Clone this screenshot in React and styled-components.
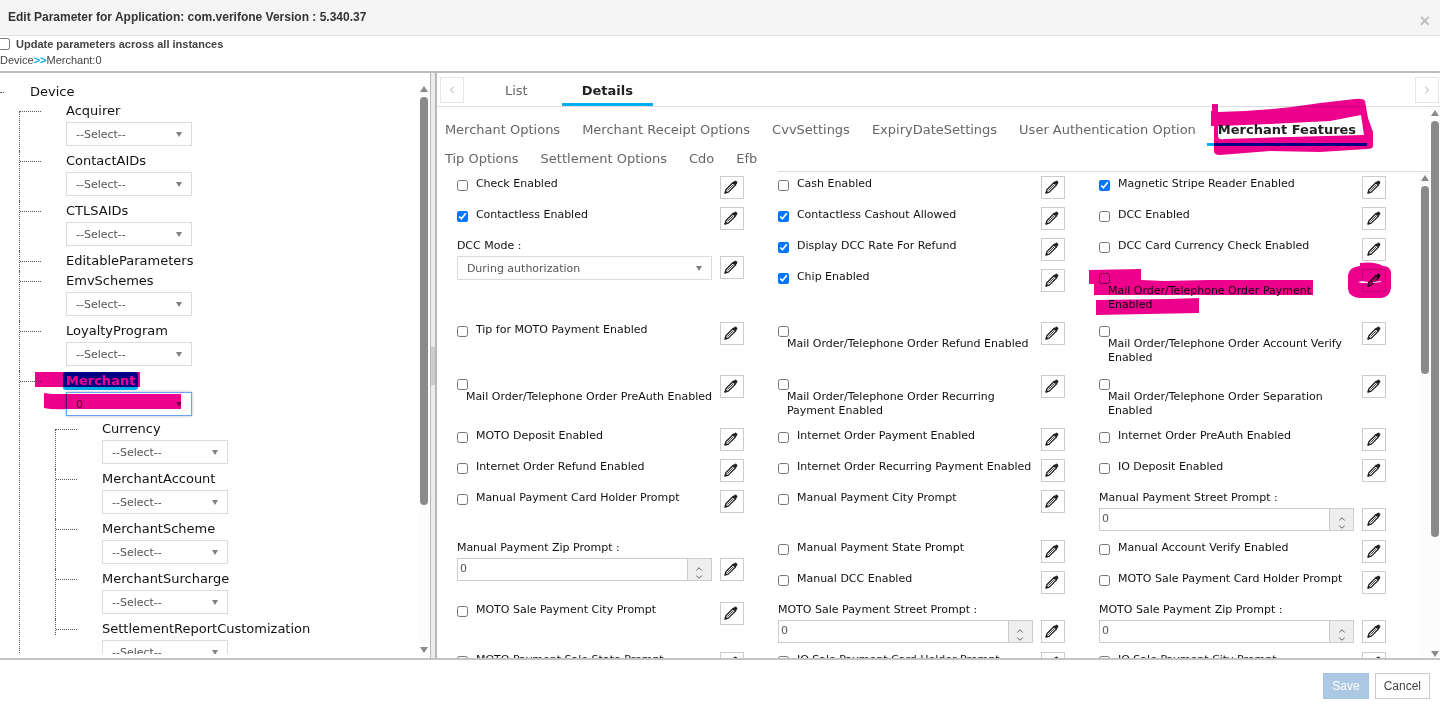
import React, { useState } from 'react'
import styled, { createGlobalStyle, css } from 'styled-components'
import { ChevronDown, ChevronLeft, ChevronRight, ChevronUp } from 'lucide-react'

const tree = [
  { name: 'Acquirer', select: '--Select--' },
  { name: 'ContactAIDs', select: '--Select--' },
  { name: 'CTLSAIDs', select: '--Select--' },
  { name: 'EditableParameters' },
  { name: 'EmvSchemes', select: '--Select--' },
  { name: 'LoyaltyProgram', select: '--Select--' },
  {
    name: 'Merchant',
    select: '0',
    active: true,
    children: [
      { name: 'Currency', select: '--Select--' },
      { name: 'MerchantAccount', select: '--Select--' },
      { name: 'MerchantScheme', select: '--Select--' },
      { name: 'MerchantSurcharge', select: '--Select--' },
      { name: 'SettlementReportCustomization', select: '--Select--' },
    ],
  },
]

const sections = [
  'Merchant Options',
  'Merchant Receipt Options',
  'CvvSettings',
  'ExpiryDateSettings',
  'User Authentication Option',
  'Merchant Features',
  'Tip Options',
  'Settlement Options',
  'Cdo',
  'Efb',
]

const fields = [
  { label: 'Check Enabled' },
  { label: 'Cash Enabled' },
  { label: 'Magnetic Stripe Reader Enabled', checked: true },
  { label: 'Contactless Enabled', checked: true },
  { label: 'Contactless Cashout Allowed', checked: true },
  { label: 'DCC Enabled' },
  { label: 'DCC Mode :', type: 'select', value: 'During authorization', span: 2 },
  { label: 'Display DCC Rate For Refund', checked: true },
  { label: 'DCC Card Currency Check Enabled' },
  { label: 'Chip Enabled', checked: true },
  { label: 'Mail Order/Telephone Order Payment Enabled', long: true, marked: true },
  { label: 'Tip for MOTO Payment Enabled' },
  { label: 'Mail Order/Telephone Order Refund Enabled', long: true },
  { label: 'Mail Order/Telephone Order Account Verify Enabled', long: true },
  { label: 'Mail Order/Telephone Order PreAuth Enabled', long: true },
  { label: 'Mail Order/Telephone Order Recurring Payment Enabled', long: true },
  { label: 'Mail Order/Telephone Order Separation Enabled', long: true },
  { label: 'MOTO Deposit Enabled' },
  { label: 'Internet Order Payment Enabled' },
  { label: 'Internet Order PreAuth Enabled' },
  { label: 'Internet Order Refund Enabled' },
  { label: 'Internet Order Recurring Payment Enabled' },
  { label: 'IO Deposit Enabled' },
  { label: 'Manual Payment Card Holder Prompt' },
  { label: 'Manual Payment City Prompt' },
  { label: 'Manual Payment Street Prompt :', type: 'number' },
  { label: 'Manual Payment Zip Prompt :', type: 'number', span: 2 },
  { label: 'Manual Payment State Prompt' },
  { label: 'Manual Account Verify Enabled' },
  { label: 'Manual DCC Enabled' },
  { label: 'MOTO Sale Payment Card Holder Prompt' },
  { label: 'MOTO Sale Payment City Prompt' },
  { label: 'MOTO Sale Payment Street Prompt :', type: 'number' },
  { label: 'MOTO Sale Payment Zip Prompt :', type: 'number' },
  { label: 'MOTO Payment Sale State Prompt' },
  { label: 'IO Sale Payment Card Holder Prompt' },
  { label: 'IO Sale Payment City Prompt' },
]

const PencilIcon = () => (
  <svg width="14" height="14" viewBox="0 0 14 14" aria-hidden="true">
    <path d="M1 13 L1.9 9.7 L9.3 2.3 L11.7 4.7 L4.3 12.1 Z" fill="none" stroke="#222" strokeWidth="1.3" strokeLinejoin="round" />
    <path d="M8.8 2.8 L10.7 0.9 Q11.5 0.2 12.3 0.9 L13.1 1.7 Q13.8 2.5 13.1 3.3 L11.2 5.2 Z" fill="#222" />
    <path d="M3.4 10.6 L9.6 4.4" stroke="#222" strokeWidth="0.8" />
    <path d="M0.5 13.5 L1.4 10.2 L3.8 12.6 Z" fill="#222" />
  </svg>
)

const Scroll = ({ size, cut }) => (
  <ScrollTrack aria-hidden="true">
    <Arrow />
    <Thumb $size={size} />
    {!cut && <Arrow $down />}
  </ScrollTrack>
)

const Dropdown = ({ id, value, active, label }) => (
  <SelectBox $active={active}>
    <select id={id} aria-label={label} defaultValue={value}>
      <option>{value}</option>
    </select>
  </SelectBox>
)

const TreeNode = ({ node }) => (
  <Node>
    <Branch><i /></Branch>
    <NodeBody>
      <NodeName>
        {node.active ? <b>{node.name}</b> : node.name}
        {node.active && (
          <Marker $left={-31} $top={1} width="105" height="16" viewBox="0 0 105 16">
            <path d="M0 0H105V15H0Z" />
          </Marker>
        )}
      </NodeName>
      {node.select && (
        <NodeSelect>
          <Dropdown value={node.select} label={node.name} active={node.active} />
          {node.active && (
            <Marker $left={-22} $top={2} width="138" height="18" viewBox="0 0 138 18">
              <path d="M0 0 L8 1 L137 1 V16 H22 Q8 17 0 15Z" />
            </Marker>
          )}
        </NodeSelect>
      )}
      {node.children && (
        <SubTree>
          {node.children.map((c) => <TreeNode key={c.name} node={c} />)}
        </SubTree>
      )}
    </NodeBody>
  </Node>
)

const Field = ({ field, id }) => {
  const [checked, setChecked] = useState(!!field.checked)
  const stacked = field.type === 'select' || field.type === 'number'

  return (
    <Cell $span={field.span} $stacked={stacked}>
      {stacked ? (
        <Stacked>
          <label htmlFor={id}>{field.label}</label>
          {field.type === 'select' ? (
            <Dropdown id={id} value={field.value} />
          ) : (
            <NumberBox>
              <input id={id} type="text" inputMode="numeric" defaultValue="0" />
              <Spinner>
                <button type="button" aria-label="Increase"><ChevronUp size={10} /></button>
                <button type="button" aria-label="Decrease"><ChevronDown size={10} /></button>
              </Spinner>
            </NumberBox>
          )}
        </Stacked>
      ) : (
        <Check $long={field.long}>
          <input id={id} type="checkbox" checked={checked} onChange={() => setChecked(!checked)} />
          <label htmlFor={id}>{field.label}</label>
          {field.marked && (
            <Marker $left={-10} $top={0} width="226" height="48" viewBox="0 0 226 48">
              <path d="M0 1 L52 0 V11 L75 12 L120 11 L224 11 V26 L5 26 V15 H0Z M7 31 L80 30 L110 29 V44 L7 46Z" />
            </Marker>
          )}
        </Check>
      )}
      <EditButton aria-label={'Edit ' + field.label}>
        <PencilIcon />
        {field.marked && (
          <>
            <Marker $left={-16} $top={-8} width="46" height="38" viewBox="0 0 46 38">
              <path d="M13 1 Q28 -1 36 4 Q44 4 44 12 V26 Q43 35 34 36 H12 Q2 35 1 27 V13 Q2 5 13 4Z" />
            </Marker>
            <Scratch width="24" height="4" viewBox="0 0 24 4">
              <path d="M0 2 L4 1 L10 2 V3 L3 3Z M15 2 L23 1 V2 L15 3Z" />
            </Scratch>
          </>
        )}
      </EditButton>
    </Cell>
  )
}

const App = () => {
  const [section, setSection] = useState('Merchant Features')

  return (
    <Page>
      <GlobalStyle />
      <Header>
        <h1>Edit Parameter for Application: com.verifone Version : 5.340.37</h1>
        <CloseButton aria-label="Close">×</CloseButton>
      </Header>
      <Options>
        <label><input type="checkbox" />Update parameters across all instances</label>
        <Crumbs>Device<b>&gt;&gt;</b>Merchant:0</Crumbs>
      </Options>
      <Main>
        <TreePanel>
          <TreeScroll>
            <RootNode>Device</RootNode>
            <Tree>
              {tree.map((n) => <TreeNode key={n.name} node={n} />)}
            </Tree>
          </TreeScroll>
          <Scroll size={72} />
        </TreePanel>
        <Splitter><i /></Splitter>
        <Panel>
          <Tabs>
            <NavButton aria-label="Previous"><ChevronLeft size={12} /></NavButton>
            <Tab>List</Tab>
            <Tab $active>Details</Tab>
            <NavButton aria-label="Next"><ChevronRight size={12} /></NavButton>
          </Tabs>
          <PanelBody>
            <Content>
              <Sections>
                {sections.map((s) => (
                  <Section key={s} $active={s === section} onClick={() => setSection(s)}>
                    {s}
                    {s === 'Merchant Features' && (
                      <Marker $left={3} $top={-15} width="164" height="58" viewBox="0 0 164 58">
                        <path
                          fillRule="evenodd"
                          d="M2 6 H8 V14 Q60 13 110 5 L145 1 Q153 0 155 3 L158 20 L163 34 V48 Q163 51 157 51 L110 54 L60 53 L10 57 Q4 57 4 53 V28 H1 V13 H2Z M8 28 V39 Q9 42 14 41 L80 39 L154 37 L151 17 L120 23 L60 26Z"
                        />
                      </Marker>
                    )}
                  </Section>
                ))}
              </Sections>
              <RuleRow><hr /></RuleRow>
              <FormArea>
                <FormGrid>
                  {fields.map((f, i) => <Field key={f.label} field={f} id={'field' + i} />)}
                </FormGrid>
                <Scroll size={39} cut />
              </FormArea>
            </Content>
            <Scroll size={76} />
          </PanelBody>
        </Panel>
      </Main>
      <Footer>
        <Action $primary>Save</Action>
        <Action>Cancel</Action>
      </Footer>
    </Page>
  )
}

export default App;

const GlobalStyle = createGlobalStyle`
*{
  box-sizing:border-box;
}
body{
  margin:0;
  background:#fff;
}
button,input,select{
  font-family:inherit;
  margin:0;
}
button{
  cursor:pointer;
}
`

const Page = styled.div`
display:flex;
flex-direction:column;
height:100vh;
overflow:hidden;
font-family:"Liberation Sans",Arial,sans-serif;
font-size:11px;
color:#444;
`

const Header = styled.header`
display:flex;
justify-content:space-between;
align-items:center;
height:36px;
padding:0 8px 2px;
background:#f5f5f5;
border-bottom:1px solid #e2e2e2;
h1{
  margin:0;
  font-size:12px;
  color:#333;
}
`

const CloseButton = styled.button`
border:0;
padding:8px 2px 0;
background:none;
font-size:18px;
line-height:18px;
font-weight:bold;
color:#c0c0c0;
`

const Options = styled.div`
height:35px;
line-height:16px;
label{
  display:flex;
  align-items:center;
  gap:6px;
  font-weight:bold;
}
input{
  width:12px;
  height:12px;
  margin-left:-2px;
}
`

const Crumbs = styled.div`
b{
  color:#00adef;
}
`

const Main = styled.main`
flex:1;
min-height:0;
display:grid;
grid-template-columns:minmax(0,3fr) 7px minmax(0,7fr);
grid-template-rows:minmax(0,1fr);
border-top:2px solid #bdbdbd;
border-bottom:2px solid #c4c4c4;
font-family:"DejaVu Sans",Verdana,sans-serif;
`

const TreePanel = styled.div`
display:flex;
padding:10px 1px 4px 0;
color:#111;
font-size:13px;
`

const TreeScroll = styled.div`
flex:1;
overflow:hidden;
`

const RootNode = styled.div`
display:flex;
align-items:center;
gap:26px;
line-height:18px;
&::before{
  content:'';
  width:4px;
  border-top:1px dotted #555;
}
`

const Tree = styled.ul`
list-style:none;
margin:0;
padding:0 0 0 19px;
`

const SubTree = styled(Tree)`
margin:-2px 0 0 -11px;
padding:0;
`

const Branch = styled.div`
flex:0 0 22px;
border-left:1px dotted #555;
i{
  display:block;
  margin-top:10px;
  border-top:1px dotted #555;
}
`

const Node = styled.li`
display:flex;
gap:25px;
&:first-child > ${Branch}{
  margin-top:10px;
  i{
    margin-top:0;
  }
}
${SubTree} > &:last-child > ${Branch}{
  height:16px;
}
`

const NodeBody = styled.div`
flex:1;
`

const NodeName = styled.div`
position:relative;
line-height:20px;
b{
  display:inline-block;
  margin:0 -3px;
  padding:0 3px;
  line-height:18px;
  border-radius:3px;
  background:#00adef;
  color:#fff;
}
`

const NodeSelect = styled.div`
position:relative;
width:126px;
padding:1px 0 5px;
`

const SelectBox = styled.div`
position:relative;
select{
  display:block;
  appearance:none;
  width:100%;
  height:24px;
  padding:0 20px 0 9px;
  border:1px solid ${(p) => (p.$active ? '#66a3f5' : '#dcdcdc')};
  box-shadow:${(p) => (p.$active ? '0 0 3px #b5b5b5' : 'none')};
  border-radius:0;
  background:#fff;
  color:#555;
  font-size:11px;
}
&::after{
  content:'';
  position:absolute;
  right:10px;
  top:10px;
  border:3px solid transparent;
  border-top:5px solid #808080;
  border-bottom:0;
  pointer-events:none;
}
`

const Marker = styled.svg`
position:absolute;
left:${(p) => p.$left}px;
top:${(p) => p.$top}px;
fill:#ec008c;
mix-blend-mode:multiply;
pointer-events:none;
`

const Scratch = styled.svg`
position:absolute;
left:-5px;
top:10px;
fill:#fff;
opacity:.9;
`

const ScrollTrack = styled.div`
flex:0 0 10px;
display:flex;
flex-direction:column;
align-items:center;
padding:3px 0 1px;
background:#fcfcfc;
`

const Arrow = styled.i`
border:4px solid transparent;
border-bottom:6px solid #8a8a8a;
border-top:0;
${(p) => p.$down && css`
  margin-top:auto;
  border-top:6px solid #8a8a8a;
  border-bottom:0;
`}
`

const Thumb = styled.div`
width:8px;
height:${(p) => p.$size}%;
margin-top:5px;
border-radius:4px;
background:#8a8a8a;
`

const Splitter = styled.div`
display:flex;
align-items:center;
border:solid #b8b8b8;
border-width:0 2px 0 1px;
background:#ececec;
i{
  width:100%;
  height:38px;
  background:#ccc;
}
`

const Panel = styled.section`
display:flex;
flex-direction:column;
min-width:0;
`

const Tabs = styled.nav`
display:flex;
align-items:center;
gap:14px;
height:34px;
padding:0 1px 0 3px;
border-bottom:1px solid #ddd;
`

const NavButton = styled.button`
display:flex;
align-items:center;
justify-content:center;
width:24px;
height:26px;
padding:0;
border:1px solid #e6e6e6;
background:#fff;
color:#aaa;
&:first-child{
  margin-right:7px;
}
&:last-child{
  margin-left:auto;
}
`

const Tab = styled.button`
align-self:flex-end;
height:31px;
padding:3px 20px 0;
border:0;
border-bottom:3px solid ${(p) => (p.$active ? '#00adef' : 'transparent')};
background:none;
font-size:13px;
font-weight:${(p) => (p.$active ? 'bold' : 'normal')};
color:${(p) => (p.$active ? '#222' : '#666')};
`

const PanelBody = styled.div`
flex:1;
display:flex;
min-height:0;
`

const Content = styled.div`
flex:1;
display:flex;
flex-direction:column;
min-width:0;
`

const Sections = styled.nav`
display:flex;
flex-wrap:wrap;
column-gap:22px;
padding:6px 8px 0;
`

const Section = styled.button`
position:relative;
height:29px;
padding:3px 0 0;
border:0;
background:none;
font-size:13px;
color:#666;
${(p) => p.$active && css`
  height:33px;
  margin:0 -11px -4px;
  padding:3px 11px 1px;
  border-bottom:3px solid #00adef;
  font-weight:bold;
  color:#222;
`}
`

const RuleRow = styled.div`
display:grid;
grid-template-columns:repeat(3,minmax(0,1fr));
padding:0 10px 0 20px;
hr{
  grid-column:2 / -1;
  margin:0 -10px 0 0;
  border:0;
  border-top:1px solid #ddd;
}
`

const FormArea = styled.div`
flex:1;
display:flex;
min-height:0;
`

const FormGrid = styled.form`
flex:1;
display:grid;
grid-template-columns:repeat(3,minmax(0,1fr));
align-content:start;
overflow:hidden;
padding:4px 0 0 20px;
font-size:11px;
line-height:14px;
color:#111;
`

const EditButton = styled.button.attrs({ type: 'button' })`
position:relative;
flex:0 0 24px;
display:flex;
align-items:center;
justify-content:center;
height:23px;
padding:0 1px 2px 0;
border:1px solid #ccc;
background:#fff;
`

const Cell = styled.div`
grid-row:span ${(p) => p.$span || 1};
display:flex;
gap:8px;
padding-right:34px;
${EditButton}{
  margin-top:${(p) => (p.$stacked ? 18 : 0)}px;
}
`

const Check = styled.div`
position:relative;
flex:1;
display:flex;
flex-direction:${(p) => (p.$long ? 'column' : 'row')};
align-items:flex-start;
gap:${(p) => (p.$long ? 0 : 8)}px;
min-height:${(p) => (p.$long ? 53 : 31)}px;
input{
  width:11px;
  height:11px;
  margin-top:4px;
  accent-color:#0075ff;
}
label{
  margin:${(p) => (p.$long ? '0 -4px 0 9px' : '1px 0 0')};
}
`

const Stacked = styled.div`
flex:1;
min-width:0;
height:50px;
label{
  display:block;
  margin:1px 0 3px;
}
`

const NumberBox = styled.div`
display:flex;
height:23px;
border:1px solid #ccc;
input{
  flex:1;
  min-width:0;
  padding:0 2px 2px;
  border:0;
  font-size:11px;
  color:#555;
}
`

const Spinner = styled.div`
display:flex;
flex-direction:column;
justify-content:flex-end;
width:24px;
border-left:1px solid #ccc;
background:#eee;
button{
  display:flex;
  justify-content:center;
  height:8px;
  padding:0;
  border:0;
  background:none;
  color:#444;
}
`

const Footer = styled.footer`
display:flex;
align-items:center;
justify-content:flex-end;
gap:6px;
height:49px;
padding:2px 10px 0;
`

const Action = styled.button`
height:26px;
padding:0 8px;
border:1px solid ${(p) => (p.$primary ? '#a5c3df' : '#ccc')};
background:${(p) => (p.$primary ? '#adc8e2' : '#fff')};
color:${(p) => (p.$primary ? '#fff' : '#444')};
font-size:12px;
`
